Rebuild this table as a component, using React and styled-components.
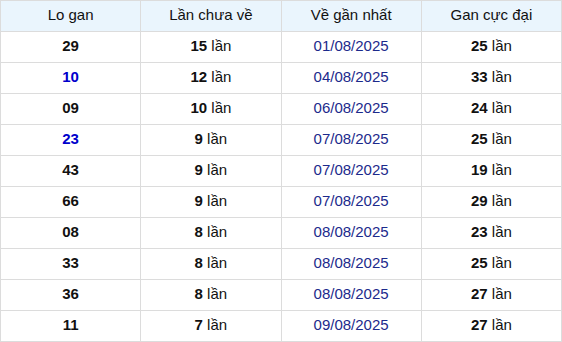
import React from 'react';
import styled, { createGlobalStyle } from 'styled-components';

const GlobalStyle = createGlobalStyle`
    body{
        margin:0;
        background:#fff;
        font-family:"Liberation Sans", Arial, sans-serif;
    }
`

const rows = [
    { num: "29", hot: false, count: 15, date: "01/08/2025", max: 25 },
    { num: "10", hot: true, count: 12, date: "04/08/2025", max: 33 },
    { num: "09", hot: false, count: 10, date: "06/08/2025", max: 24 },
    { num: "23", hot: true, count: 9, date: "07/08/2025", max: 25 },
    { num: "43", hot: false, count: 9, date: "07/08/2025", max: 19 },
    { num: "66", hot: false, count: 9, date: "07/08/2025", max: 29 },
    { num: "08", hot: false, count: 8, date: "08/08/2025", max: 23 },
    { num: "33", hot: false, count: 8, date: "08/08/2025", max: 25 },
    { num: "36", hot: false, count: 8, date: "08/08/2025", max: 27 },
    { num: "11", hot: false, count: 7, date: "09/08/2025", max: 27 },
]

const App = () => {
    return (
        <>
            <GlobalStyle />
            <Table>
                <thead>
                    <Row>
                        <Th>Lo gan</Th>
                        <Th>Lần chưa về</Th>
                        <Th>Về gần nhất</Th>
                        <Th>Gan cực đại</Th>
                    </Row>
                </thead>
                <tbody>
                    {
                        rows.map((r, i) => (
                            <Row key={i}>
                                <Td><Num $hot={r.hot}>{r.num}</Num></Td>
                                <Td><b>{r.count}</b> lần</Td>
                                <Td><DateText>{r.date}</DateText></Td>
                                <Td><b>{r.max}</b> lần</Td>
                            </Row>
                        ))
                    }
                </tbody>
            </Table>
        </>
    );
};

export default App;

const Table = styled.table`
    width:562px;
    border-collapse:collapse;
    table-layout:fixed;
    font-size:15px;
    line-height:17px;
    color:#111;
`
const Row = styled.tr`
    height:31px;
`
const Th = styled.th`
    padding:0 0 3px;
    background:#eaf5fd;
    border:1px solid #dcdcdc;
    font-weight:400;
    text-align:center;
    color:#111;
`
const Td = styled.td`
    padding:0 0 3px;
    border:1px solid #dcdcdc;
    text-align:center;

    b{
        font-weight:700;
    }
`
const Num = styled.span`
    font-weight:700;
    color:${props => props.$hot ? "#0000cc" : "#111"};
`
const DateText = styled.span`
    color:#1c2a8c;
`
